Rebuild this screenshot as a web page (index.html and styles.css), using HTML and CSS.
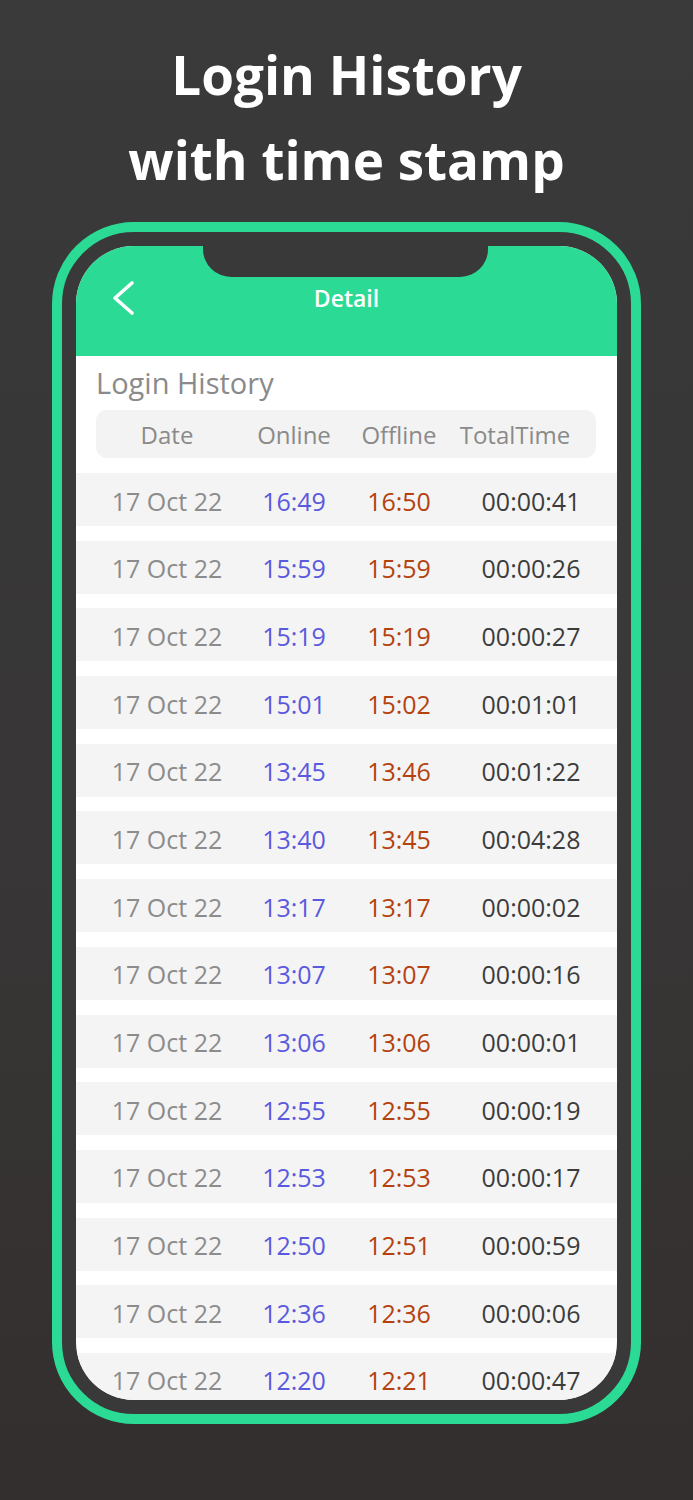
FILE: index.html
```html
<!DOCTYPE html>
<html>
<head>
<meta charset="utf-8">
<link rel="stylesheet" href="styles.css">
</head>
<body>
<div class="page">
  <h1 class="headline">Login History<br>with time stamp</h1>
  <div class="phone">
    <div class="screen">
      <div class="notch"></div>
      <div class="navbar">
        <svg class="back" width="24" height="36" viewBox="0 0 24 36"><polyline points="20,3 3,18 20,33" fill="none" stroke="#fff" stroke-width="3.6" stroke-linecap="round" stroke-linejoin="round"/></svg>
        <div class="nav-title">Detail</div>
        <div></div>
      </div>
      <div class="content">
        <div class="section-title">Login History</div>
        <div class="thead">
          <div class="cell">Date</div>
          <div class="cell">Online</div>
          <div class="cell">Offline</div>
          <div class="cell">TotalTime</div>
        </div>
        <div class="rows">
          <div class="row"><div class="cell date">17 Oct 22</div><div class="cell on">16:49</div><div class="cell off">16:50</div><div class="cell total">00:00:41</div></div>
          <div class="row"><div class="cell date">17 Oct 22</div><div class="cell on">15:59</div><div class="cell off">15:59</div><div class="cell total">00:00:26</div></div>
          <div class="row"><div class="cell date">17 Oct 22</div><div class="cell on">15:19</div><div class="cell off">15:19</div><div class="cell total">00:00:27</div></div>
          <div class="row"><div class="cell date">17 Oct 22</div><div class="cell on">15:01</div><div class="cell off">15:02</div><div class="cell total">00:01:01</div></div>
          <div class="row"><div class="cell date">17 Oct 22</div><div class="cell on">13:45</div><div class="cell off">13:46</div><div class="cell total">00:01:22</div></div>
          <div class="row"><div class="cell date">17 Oct 22</div><div class="cell on">13:40</div><div class="cell off">13:45</div><div class="cell total">00:04:28</div></div>
          <div class="row"><div class="cell date">17 Oct 22</div><div class="cell on">13:17</div><div class="cell off">13:17</div><div class="cell total">00:00:02</div></div>
          <div class="row"><div class="cell date">17 Oct 22</div><div class="cell on">13:07</div><div class="cell off">13:07</div><div class="cell total">00:00:16</div></div>
          <div class="row"><div class="cell date">17 Oct 22</div><div class="cell on">13:06</div><div class="cell off">13:06</div><div class="cell total">00:00:01</div></div>
          <div class="row"><div class="cell date">17 Oct 22</div><div class="cell on">12:55</div><div class="cell off">12:55</div><div class="cell total">00:00:19</div></div>
          <div class="row"><div class="cell date">17 Oct 22</div><div class="cell on">12:53</div><div class="cell off">12:53</div><div class="cell total">00:00:17</div></div>
          <div class="row"><div class="cell date">17 Oct 22</div><div class="cell on">12:50</div><div class="cell off">12:51</div><div class="cell total">00:00:59</div></div>
          <div class="row"><div class="cell date">17 Oct 22</div><div class="cell on">12:36</div><div class="cell off">12:36</div><div class="cell total">00:00:06</div></div>
          <div class="row"><div class="cell date">17 Oct 22</div><div class="cell on">12:20</div><div class="cell off">12:21</div><div class="cell total">00:00:47</div></div>
        </div>
      </div>
    </div>
  </div>
</div>
</body>
</html>
```

FILE: styles.css
```css
html, body {
  margin: 0;
  padding: 0;
}
body {
  width: 693px;
  height: 1500px;
  overflow: hidden;
  background: linear-gradient(180deg, #3a3a3a 0%, #373535 60%, #342f2f 100%);
  font-family: "Open Sans", "Noto Sans", sans-serif;
}
.page {
  width: 693px;
  height: 1500px;
  display: flex;
  flex-direction: column;
  align-items: center;
}
.headline {
  margin: 32px 0 0;
  color: #fff;
  font-family: "Open Sans", sans-serif;
  font-weight: 700;
  font-size: 53px;
  line-height: 85px;
  text-align: center;
  letter-spacing: 0;
}
.phone {
  margin-top: 20px;
  box-sizing: border-box;
  width: 589px;
  height: 1202px;
  border: 10px solid #2bdb95;
  border-radius: 82px;
  background: #393939;
  padding: 14px;
}
.screen {
  position: relative;
  width: 100%;
  height: 100%;
  border-radius: 58px;
  overflow: hidden;
  background: #fff;
}
.notch {
  position: absolute;
  top: 0;
  left: 127px;
  width: 285px;
  height: 31px;
  background: #393939;
  border-radius: 0 0 28px 28px;
}
.navbar {
  height: 110px;
  box-sizing: border-box;
  background: #2bdb95;
  padding: 34px 36px 0;
  display: grid;
  grid-template-columns: 1fr auto 1fr;
  align-items: start;
}
.back {
  display: block;
}
.nav-title {
  color: #fff;
  font-size: 23px;
  font-weight: 600;
  line-height: 36px;
}
.section-title {
  padding: 9px 20px 0;
  font-size: 29px;
  line-height: 36px;
  color: #8a8a8a;
}
.thead {
  margin: 9px 21px 0 20px;
  height: 48px;
  border-radius: 11px;
  background: #f3f3f3;
  display: grid;
  grid-template-columns: 142px 112px 98px 134px;
  align-items: center;
  font-size: 24px;
  color: #8a8a8a;
}
.cell {
  display: flex;
  justify-content: center;
  white-space: nowrap;
}
.rows {
  margin-top: 15px;
  display: flex;
  flex-direction: column;
  gap: 14.7px;
}
.row {
  height: 53px;
  background: #f4f4f4;
  display: grid;
  grid-template-columns: 182px 72px 138px 126px;
  align-items: center;
  font-size: 25px;
  padding-top: 2px;
  box-sizing: border-box;
}
.date { color: #8c8c8c; }
.on { color: #5a5ade; }
.off { color: #b4420f; }
.total { color: #3c3c3c; }
```
